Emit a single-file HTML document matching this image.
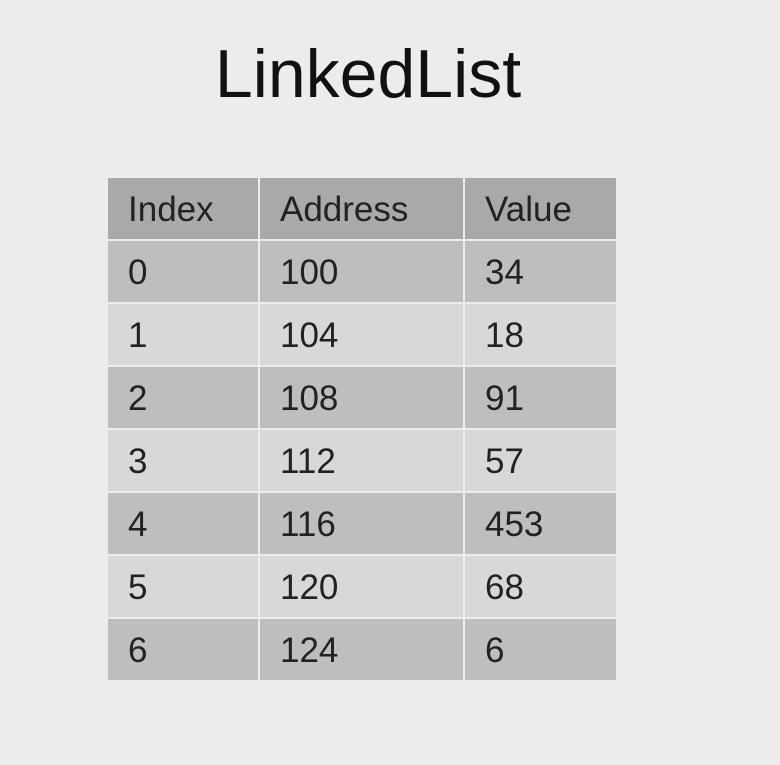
<!DOCTYPE html>
<html><head><style>
html,body{margin:0;padding:0;background:#ececec;width:780px;height:765px;overflow:hidden;font-family:"Liberation Sans",sans-serif;}
h1{position:absolute;left:0;width:736px;top:36px;margin:0;text-align:center;font-weight:normal;font-size:68px;line-height:76px;color:#111;}
table{position:absolute;left:106px;top:176px;border-collapse:separate;border-spacing:2px;background:#ececec;}
td{padding:2px 0 0 20px;height:59px;font-size:35px;color:#222;}
tr.h td{background:#a9a9a9;}
tr.d td{background:#bebebe;}
tr.l td{background:#d8d8d8;}
</style></head><body>
<h1>LinkedList</h1>
<table>
<tr class="h"><td style="width:130px">Index</td><td style="width:183px">Address</td><td style="width:131px">Value</td></tr>
<tr class="d"><td>0</td><td>100</td><td>34</td></tr>
<tr class="l"><td>1</td><td>104</td><td>18</td></tr>
<tr class="d"><td>2</td><td>108</td><td>91</td></tr>
<tr class="l"><td>3</td><td>112</td><td>57</td></tr>
<tr class="d"><td>4</td><td>116</td><td>453</td></tr>
<tr class="l"><td>5</td><td>120</td><td>68</td></tr>
<tr class="d"><td>6</td><td>124</td><td>6</td></tr>
</table>
</body></html>
